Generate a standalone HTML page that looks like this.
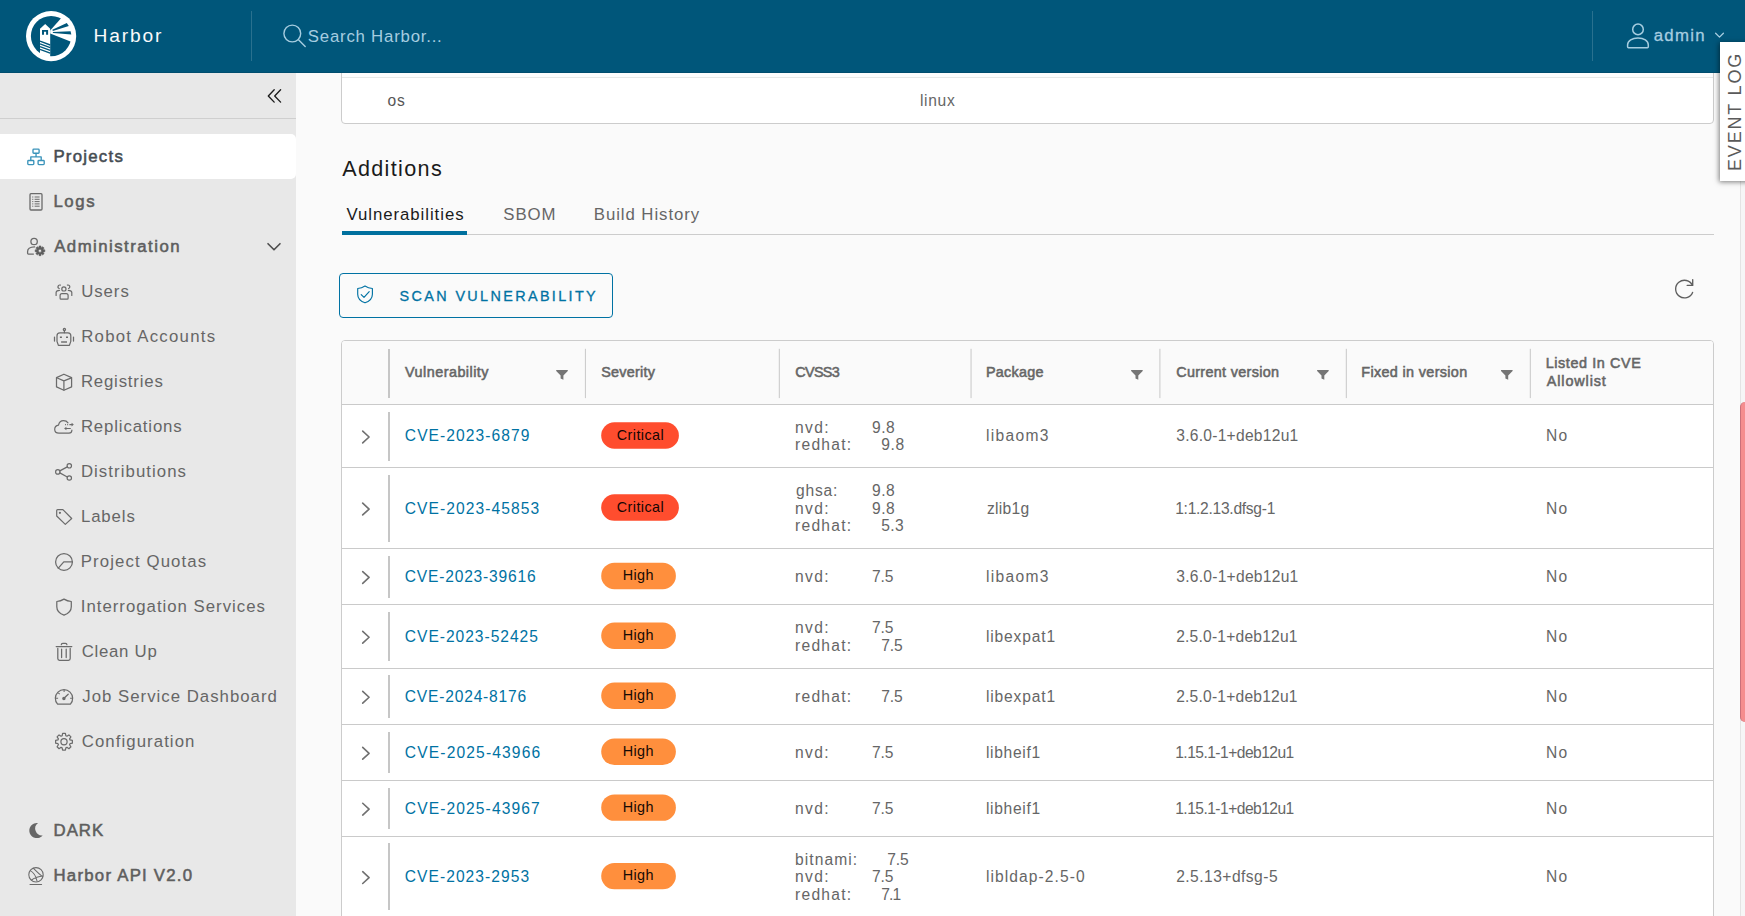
<!DOCTYPE html>
<html lang="en">
<head>
<meta charset="utf-8">
<title>Harbor</title>
<style>
html,body{margin:0;padding:0}
body{width:1745px;height:916px;overflow:hidden;position:relative;background:#fafafa;font-family:"Liberation Sans",sans-serif;color:#666}
.a{position:absolute}
.t{position:absolute;white-space:pre;line-height:1}
svg{position:absolute;overflow:visible}
#hdr{left:0;top:0;width:1745px;height:72px;background:#00567a;border-bottom:1px solid rgba(0,74,106,.72)}
.hdiv{top:10.6px;height:50px;width:1.2px;background:rgba(255,255,255,.16)}
#side{left:0;top:72px;width:296px;height:844px;background:#e8e8e8}
#sideline{left:0;top:117.6px;width:296px;height:1.2px;background:#cfcfcf}
#active{left:0;top:134.2px;width:295.8px;height:44.6px;background:#fff;border-radius:0 5px 5px 0}
#topbox{left:341px;top:60px;width:1371px;height:62px;background:#fff;border:1px solid #ccc;border-radius:0 0 4px 4px;box-sizing:content-box}
#tabline{left:342px;top:234px;width:1372px;height:1px;background:#ccc}
#tabact{left:342px;top:231px;width:125px;height:4px;background:#00709e}
#btn{left:339px;top:273px;width:272px;height:43px;border:1px solid #0072a3;border-radius:4px}
#grid{left:341px;top:340px;width:1371px;height:600px;border:1px solid #ccc;border-radius:4px 4px 0 0;background:#fff;overflow:hidden}
#ghead{left:0;top:0;width:1372px;height:63px;background:#fafafa}
.hl{position:absolute;left:342px;width:1371px;height:1px;background:#cacaca}
.vs{position:absolute;left:388px;width:2px;background:#c6c6c6}
.hs{position:absolute;top:349px;height:49px;width:1px;background:#c8c8c8}
.badge{position:absolute;left:601.2px;height:26.6px;border-radius:13.3px;color:#000;font-size:13.2px;line-height:26.6px;text-align:center;white-space:pre}
.badge span{position:relative;top:-.4px;left:.3px}
.crit{background:#ff4d2e}
.high{background:#ff8f3d}
#evt{left:1719.5px;top:41.6px;width:40px;height:139.4px;background:#fff;box-shadow:-1px 1px 5px rgba(0,0,0,.5)}
#sbtrack{left:1740px;top:73px;width:5px;height:844px;background:#f6f6f6;border-left:1px solid #e4e4e4}
#sbthumb{left:1740px;top:402px;width:12px;height:319.5px;background:#f58d8e;border-radius:5px;border-left:1.2px solid #c9707a;box-sizing:border-box}
</style>
</head>
<body>
<!-- content area -->
<div class="a" id="topbox"></div>
<div class="a" style="left:342px;top:72px;width:1371px;height:5px;background:#fcfdfd"></div>
<div class="a" style="left:342px;top:77px;width:1371px;height:1px;background:#e6e9e8"></div>
<div class="a" id="tabline"></div>
<div class="a" id="tabact"></div>
<div class="a" id="btn"></div>
<div class="a" id="grid"><div class="a" id="ghead"></div></div>
<div class="hl" style="top:404px"></div>
<div class="vs" style="top:349px;height:49px"></div>
<div class="hl" style="top:467px"></div>
<div class="vs" style="top:412px;height:49px"></div>
<div class="hl" style="top:548px"></div>
<div class="vs" style="top:475px;height:67px"></div>
<div class="hl" style="top:604px"></div>
<div class="vs" style="top:556px;height:42px"></div>
<div class="hl" style="top:668px"></div>
<div class="vs" style="top:612px;height:49px"></div>
<div class="hl" style="top:724px"></div>
<div class="vs" style="top:675px;height:43px"></div>
<div class="hl" style="top:780px"></div>
<div class="vs" style="top:732px;height:41px"></div>
<div class="hl" style="top:836px"></div>
<div class="vs" style="top:788px;height:41px"></div>
<div class="hl" style="top:917px"></div>
<div class="vs" style="top:843px;height:67px"></div>
<svg class="a" style="left:0;top:0" width="1745" height="916" viewBox="0 0 1745 916"><rect x="584.9" y="348.8" width="1" height="49.3" fill="#c8c8c8"/><rect x="778.8" y="348.8" width="1" height="49.3" fill="#c8c8c8"/><rect x="970.55" y="348.8" width="1" height="49.3" fill="#c8c8c8"/><rect x="1159.4" y="348.8" width="1" height="49.3" fill="#c8c8c8"/><rect x="1345.8" y="348.8" width="1" height="49.3" fill="#c8c8c8"/><rect x="1529.8" y="348.8" width="1" height="49.3" fill="#c8c8c8"/><path d="M362.7 431.10 L369.1 437.00 L362.7 442.90" fill="none" stroke="#707070" stroke-width="1.6" stroke-linecap="round" stroke-linejoin="round"/><rect x="601.2" y="422.30" width="77.7" height="26.4" rx="13.2" fill="#ff4d2e"/><path d="M362.7 503.15 L369.1 509.05 L362.7 514.95" fill="none" stroke="#707070" stroke-width="1.6" stroke-linecap="round" stroke-linejoin="round"/><rect x="601.2" y="494.35" width="77.7" height="26.4" rx="13.2" fill="#ff4d2e"/><path d="M362.7 571.55 L369.1 577.45 L362.7 583.35" fill="none" stroke="#707070" stroke-width="1.6" stroke-linecap="round" stroke-linejoin="round"/><rect x="601.2" y="562.75" width="74.7" height="26.4" rx="13.2" fill="#ff8f3d"/><path d="M362.7 631.35 L369.1 637.25 L362.7 643.15" fill="none" stroke="#707070" stroke-width="1.6" stroke-linecap="round" stroke-linejoin="round"/><rect x="601.2" y="622.55" width="74.7" height="26.4" rx="13.2" fill="#ff8f3d"/><path d="M362.7 691.35 L369.1 697.25 L362.7 703.15" fill="none" stroke="#707070" stroke-width="1.6" stroke-linecap="round" stroke-linejoin="round"/><rect x="601.2" y="682.55" width="74.7" height="26.4" rx="13.2" fill="#ff8f3d"/><path d="M362.7 747.40 L369.1 753.30 L362.7 759.20" fill="none" stroke="#707070" stroke-width="1.6" stroke-linecap="round" stroke-linejoin="round"/><rect x="601.2" y="738.60" width="74.7" height="26.4" rx="13.2" fill="#ff8f3d"/><path d="M362.7 803.25 L369.1 809.15 L362.7 815.05" fill="none" stroke="#707070" stroke-width="1.6" stroke-linecap="round" stroke-linejoin="round"/><rect x="601.2" y="794.45" width="74.7" height="26.4" rx="13.2" fill="#ff8f3d"/><path d="M362.7 871.70 L369.1 877.60 L362.7 883.50" fill="none" stroke="#707070" stroke-width="1.6" stroke-linecap="round" stroke-linejoin="round"/><rect x="601.2" y="862.90" width="74.7" height="26.4" rx="13.2" fill="#ff8f3d"/></svg>
<!-- scrollbar -->
<div class="a" id="sbtrack"></div>
<div class="a" id="sbthumb"></div>
<!-- sidebar -->
<div class="a" id="side"></div>
<div class="a" id="sideline"></div>
<div class="a" id="active"></div>
<!-- header -->
<div class="a" id="hdr"></div>
<div class="a hdiv" style="left:251px"></div>
<div class="a hdiv" style="left:1591.8px"></div>
<div class="a" id="evt"></div>
<svg class="a" style="left:0;top:0" width="1745" height="916" viewBox="0 0 1745 916" fill="none" stroke-linecap="round" stroke-linejoin="round">
<g stroke="none"><circle cx="51.1" cy="36.1" r="25.1" fill="#fff"/><circle cx="51.1" cy="36.1" r="20.2" fill="#00567a"/><path d="M40 28.8 L45.2 24.1 L50.2 28.8 V57.5 L40 54.5 Z" fill="#fff"/><path d="M50.2 30.4 L62.6 16.6 L75.2 30 L73 42.6 L50.2 33.4 Z" fill="#fff"/><path d="M52.3 29.7 L66.8 22.9 L68.8 26 L52.9 31.1 Z" fill="#00567a"/><path d="M52.6 31.9 L70.6 31.3 L71.3 34.6 L53.2 32.9 Z" fill="#00567a"/><path d="M42 30 H48.1 V34.8 H46.1 V31.7 H44 V34.8 H42 Z" fill="#00567a"/></g>
<g stroke="#00567a" stroke-width="1.35" stroke-linecap="butt"><path d="M40 41.2 L50.2 45 M40 43.9 L50.2 47.7 M40 46.6 L50.2 50.4 M40 49.3 L50.2 53.1"/></g>
<g stroke="#a6cde0" stroke-width="1.4"><circle cx="292.3" cy="33.5" r="8.4"/><path d="M298.5 39.8 L305.2 46.6"/></g>
<g stroke="#a6cde0" stroke-width="1.5"><circle cx="1638" cy="29.4" r="5.3"/><path d="M1627.6 46.8 V44.8 C1627.6 40.6 1632.2 37.9 1638 37.9 C1643.8 37.9 1648.3 40.6 1648.3 44.8 V46.8 Q1648.3 47.7 1647.4 47.7 H1628.5 Q1627.6 47.7 1627.6 46.8 Z"/></g>
<path d="M1715.6 33.2 L1719.5 37.1 L1723.4 33.2" stroke="#a6cde0" stroke-width="1.3"/>
<path d="M274.2 89.8 L268.3 96 L274.2 102.1 M280.6 89.8 L274.7 96 L280.6 102.1" stroke="#1c1c1c" stroke-width="1.35"/>
<path d="M268 243.7 L274 249.8 L280 243.7" stroke="#4d4d4d" stroke-width="1.6"/>
<g stroke="#3a93ba" stroke-width="1.35"><rect x="33" y="149.1" width="6.1" height="4.1" rx=".8"/><rect x="27.8" y="160.5" width="6" height="4.1" rx=".8"/><rect x="38.1" y="160.5" width="6.1" height="4.1" rx=".8"/><path d="M36.05 153.4 V156.9 M30.8 160.3 V156.9 H41.2 V160.3"/></g>
<g stroke="#6b6b6b"><rect x="30" y="193.7" width="12" height="16.3" rx="1" stroke-width="1.3"/><path stroke-width="1" stroke-linecap="butt" d="M34.6 197 H39.6 M34.6 199.3 H39.6 M34.6 201.6 H39.6 M34.6 203.9 H39.6 M34.6 206.2 H39.6 M32.2 197 h1.1 M32.2 199.3 h1.1 M32.2 201.6 h1.1 M32.2 203.9 h1.1 M32.2 206.2 h1.1"/></g>
<g stroke="#6b6b6b" stroke-width="1.3"><circle cx="34.1" cy="241.5" r="3.2"/><path d="M33.4 254.1 H28.4 Q27.6 254.1 27.6 253.3 V251.6 C27.6 248.6 30.6 247 34.6 246.9"/></g>
<path d="M38.91 247.26 L39.02 245.90 L40.98 245.90 L41.09 247.26 L41.73 247.53 L42.78 246.64 L44.16 248.02 L43.27 249.07 L43.54 249.71 L44.90 249.82 L44.90 251.78 L43.54 251.89 L43.27 252.53 L44.16 253.58 L42.78 254.96 L41.73 254.07 L41.09 254.34 L40.98 255.70 L39.02 255.70 L38.91 254.34 L38.27 254.07 L37.22 254.96 L35.84 253.58 L36.73 252.53 L36.46 251.89 L35.10 251.78 L35.10 249.82 L36.46 249.71 L36.73 249.07 L35.84 248.02 L37.22 246.64 L38.27 247.53 Z M41.6 250.8 A1.6 1.6 0 1 0 38.4 250.8 A1.6 1.6 0 1 0 41.6 250.8 Z" fill="#5e5e5e" fill-rule="evenodd" stroke="#5e5e5e" stroke-width=".5"/>
<g stroke="#6b6b6b" stroke-width="1.2"><circle cx="63.9" cy="288.9" r="2.1"/><path d="M60.1 298.2 V295.6 Q60.1 293.7 62 293.7 H66.2 Q68.1 293.7 68.1 295.6 V298.2 Q68.1 299.1 67.2 299.1 H61 Q60.1 299.1 60.1 298.2 Z"/><path d="M56.1 295.4 V292.6 Q56.1 290.4 59.5 290.3 M71.8 295.4 V292.6 Q71.8 290.4 68.3 290.3"/><path d="M60.4 285.1 A1.8 1.8 0 1 0 59.2 288.5 M67.4 285.1 A1.8 1.8 0 1 1 68.6 288.5"/></g>
<g stroke="#6b6b6b" stroke-width="1.25"><path d="M59.9 332.9 H67.9 Q70.8 332.9 70.8 335.8 V341.4 L69.4 345.4 H58.4 L57 341.4 V335.8 Q57 332.9 59.9 332.9 Z"/><path d="M64.4 332.7 V330.8"/><circle cx="64.4" cy="329.5" r="1.1"/><path d="M54.5 337.1 V341 M73.5 337.1 V341"/><path stroke-width="1.4" stroke-linecap="butt" d="M59.9 337.2 h2 M66 337.2 h2"/><path stroke="#858585" stroke-width="1.8" stroke-linecap="butt" d="M61.1 342 H67"/></g>
<g stroke="#6b6b6b" stroke-width="1.25"><path d="M63.9 374.2 L71.6 377.6 V386.9 L63.9 390.2 L56.5 386.9 V377.6 Z"/><path d="M56.7 377.8 L63.9 380.9 L71.4 377.8 M63.9 380.9 V390"/></g>
<g stroke="#6b6b6b" stroke-width="1.2"><path d="M71.9 430.2 C71.8 432 70.6 433.2 69 433.2 H59 C56.4 433.2 54.7 431.6 54.7 429.3 C54.7 427 56.3 425.4 58.5 425.1 C59.1 422.4 61.1 420.7 63.5 420.7 C65.5 420.7 67.1 421.5 68 422.8"/><path stroke-width="1.1" stroke-linecap="butt" d="M65 424.6 h.9 M67.2 424.6 h.9 M69.4 424.6 H72 M70.8 428.5 H66"/><path fill="#6b6b6b" stroke="none" d="M71.6 422.8 L73.8 424.6 L71.6 426.4 Z M66.4 426.7 L64.1 428.5 L66.4 430.3 Z"/></g>
<g stroke="#6b6b6b" stroke-width="1.2"><circle cx="57.8" cy="471.9" r="2.2"/><circle cx="69.3" cy="465.8" r="2.2"/><circle cx="69.3" cy="478" r="2.2"/><path d="M59.8 470.9 L67.3 466.9 M59.8 472.9 L67.3 477"/></g>
<g stroke="#6b6b6b" stroke-width="1.2"><path d="M57.6 509.7 H62.9 L71.7 518.5 L65.3 524.4 L56.7 516 V510.6 Q56.7 509.7 57.6 509.7 Z"/><circle cx="59.9" cy="512.8" r=".5" fill="#6b6b6b"/></g>
<g stroke="#6b6b6b" stroke-width="1.25"><circle cx="64" cy="561.9" r="8.4"/><path d="M72.3 561.8 H63.8 L58.3 568.2"/></g>
<path stroke="#6b6b6b" stroke-width="1.25" d="M64 599.1 C61.6 600.6 59.2 601.3 56.8 601.5 V606.8 C56.8 610.9 60 613.8 64 615.2 C68 613.8 71.3 610.9 71.3 606.8 V601.5 C68.8 601.3 66.4 600.6 64 599.1 Z"/>
<g stroke="#6b6b6b" stroke-width="1.25"><path d="M56.2 646.5 H71.8 M61.3 644.7 Q61.3 643.3 62.8 643.3 H65.4 Q66.9 643.3 66.9 644.7"/><path d="M57.8 648.4 V658.6 Q57.8 660.3 59.5 660.3 H68.5 Q70.2 660.3 70.2 658.6 V648.4 M61.6 649.2 V657.5 M66.2 649.2 V657.5"/></g>
<g stroke="#6b6b6b" stroke-width="1.25"><path d="M57.6 704.2 A8.65 8.65 0 1 1 70.4 704.2 Z"/><path d="M64 698.2 L68.2 694.2"/><circle cx="63.9" cy="698.4" r="1.1" fill="#6b6b6b"/><path stroke-width="1.05" stroke-linecap="butt" d="M55.9 698.3 h2.2 M70.1 698.3 h2.2 M64.1 690 v2 M58.2 692.9 L59.8 694.1"/></g>
<g stroke="#6b6b6b" stroke-width="1.2"><path d="M62.15 735.78 L62.60 733.42 L65.40 733.42 L65.85 735.78 L66.95 736.23 L68.94 734.88 L70.92 736.86 L69.57 738.85 L70.02 739.95 L72.38 740.40 L72.38 743.20 L70.02 743.65 L69.57 744.75 L70.92 746.74 L68.94 748.72 L66.95 747.37 L65.85 747.82 L65.40 750.18 L62.60 750.18 L62.15 747.82 L61.05 747.37 L59.06 748.72 L57.08 746.74 L58.43 744.75 L57.98 743.65 L55.62 743.20 L55.62 740.40 L57.98 739.95 L58.43 738.85 L57.08 736.86 L59.06 734.88 L61.05 736.23 Z"/><circle cx="64" cy="741.8" r="3.1"/></g>
<path fill="#666" stroke="none" d="M38 823 A7.6 7.6 0 1 0 42.7 835.4 A6.9 6.9 0 0 1 38 823 Z"/>
<g stroke="#6b6b6b" stroke-width="1.05"><circle cx="36" cy="874.8" r="7.2"/><path d="M30.3 870.6 C33 872 35.5 874.5 37 880.8 M31.5 880 C35 877.5 39.5 876.2 43 876 M33.5 868.3 C36.5 871.5 40 874.5 42.6 876.8 M30 884.4 H41.6" /></g>
<g stroke="#0072a3" stroke-width="1.15"><path d="M365 286 C362.6 287.6 360.2 288.3 357.7 288.5 V294.2 C357.7 298.4 361 301.4 365 302.8 C369 301.4 372.4 298.4 372.4 294.2 V288.5 C369.8 288.3 367.4 287.6 365 286 Z"/><path d="M361.2 294.6 L364 297.4 L369.2 291.6"/></g>
<g stroke="#5e5e5e" stroke-width="1.35"><path d="M1692.4 285.3 A8.8 8.8 0 1 0 1692.6 292.4"/><path d="M1692.7 279.6 V285.4 H1687.2"/></g>
<path d="M556.2 369.9 h11.6 v1.1 l-4.4 4.5 v4.3 l-2.8 -1.3 v-3 l-4.4 -4.5 Z" fill="#757575"/>
<path d="M1131.1 369.9 h11.6 v1.1 l-4.4 4.5 v4.3 l-2.8 -1.3 v-3 l-4.4 -4.5 Z" fill="#757575"/>
<path d="M1317.1 369.9 h11.6 v1.1 l-4.4 4.5 v4.3 l-2.8 -1.3 v-3 l-4.4 -4.5 Z" fill="#757575"/>
<path d="M1501 369.9 h11.6 v1.1 l-4.4 4.5 v4.3 l-2.8 -1.3 v-3 l-4.4 -4.5 Z" fill="#757575"/>
</svg>
<div class="t" style="left:1725.7px;top:171px;font-size:18px;color:#5a5a5a;letter-spacing:1.82px;transform-origin:0 0;transform:rotate(-90deg)">EVENT LOG</div>
<div class="t" style="left:93.60px;top:26px;font-size:19.2px;color:#fafafa;letter-spacing:1.828px;">Harbor</div>
<div class="t" style="left:307.80px;top:29px;font-size:16.8px;color:#a6cde0;letter-spacing:0.785px;">Search Harbor...</div>
<div class="t" style="left:1653.70px;top:28px;font-size:16.8px;color:#a6cde0;-webkit-text-stroke:.3px;letter-spacing:1.282px;">admin</div>
<div class="t" style="left:53.40px;top:149px;font-size:16.8px;color:#454c52;-webkit-text-stroke:.55px;letter-spacing:1.253px;">Projects</div>
<div class="t" style="left:53.40px;top:194px;font-size:16.8px;color:#5e5e5e;-webkit-text-stroke:.55px;letter-spacing:1.600px;">Logs</div>
<div class="t" style="left:54.20px;top:239px;font-size:16.8px;color:#5e5e5e;-webkit-text-stroke:.55px;letter-spacing:1.462px;">Administration</div>
<div class="t" style="left:81.20px;top:284px;font-size:16.8px;color:#666;letter-spacing:0.942px;">Users</div>
<div class="t" style="left:81.20px;top:329px;font-size:16.8px;color:#666;letter-spacing:1.256px;">Robot Accounts</div>
<div class="t" style="left:80.90px;top:374px;font-size:16.8px;color:#666;letter-spacing:0.809px;">Registries</div>
<div class="t" style="left:80.90px;top:419px;font-size:16.8px;color:#666;letter-spacing:0.853px;">Replications</div>
<div class="t" style="left:80.90px;top:464px;font-size:16.8px;color:#666;letter-spacing:1.063px;">Distributions</div>
<div class="t" style="left:80.90px;top:509px;font-size:16.8px;color:#666;letter-spacing:0.908px;">Labels</div>
<div class="t" style="left:80.80px;top:554px;font-size:16.8px;color:#666;letter-spacing:1.100px;">Project Quotas</div>
<div class="t" style="left:80.80px;top:599px;font-size:16.8px;color:#666;letter-spacing:0.993px;">Interrogation Services</div>
<div class="t" style="left:81.70px;top:644px;font-size:16.8px;color:#666;letter-spacing:0.725px;">Clean Up</div>
<div class="t" style="left:82.30px;top:689px;font-size:16.8px;color:#666;letter-spacing:1.005px;">Job Service Dashboard</div>
<div class="t" style="left:81.70px;top:734px;font-size:16.8px;color:#666;letter-spacing:1.076px;">Configuration</div>
<div class="t" style="left:53.50px;top:823px;font-size:16.8px;color:#5e5e5e;-webkit-text-stroke:.55px;letter-spacing:1.023px;">DARK</div>
<div class="t" style="left:53.50px;top:868px;font-size:16.8px;color:#5e5e5e;-webkit-text-stroke:.55px;letter-spacing:1.239px;">Harbor API V2.0</div>
<div class="t" style="left:387.40px;top:93px;font-size:15.6px;color:#565656;letter-spacing:0.927px;">os</div>
<div class="t" style="left:919.90px;top:93px;font-size:15.6px;color:#666;letter-spacing:0.707px;">linux</div>
<div class="t" style="left:342.20px;top:158px;font-size:21.6px;color:#1a1a1a;letter-spacing:1.333px;">Additions</div>
<div class="t" style="left:346.40px;top:207px;font-size:16.8px;color:#1a1a1a;letter-spacing:0.953px;">Vulnerabilities</div>
<div class="t" style="left:503.30px;top:207px;font-size:16.8px;color:#666;letter-spacing:0.954px;">SBOM</div>
<div class="t" style="left:593.80px;top:207px;font-size:16.8px;color:#666;letter-spacing:0.933px;">Build History</div>
<div class="t" style="left:399.60px;top:289px;font-size:14.4px;color:#0072a3;-webkit-text-stroke:.3px;letter-spacing:2.362px;">SCAN VULNERABILITY</div>
<div class="t" style="left:405.10px;top:365px;font-size:14.4px;color:#666;-webkit-text-stroke:.55px;letter-spacing:0.462px;">Vulnerability</div>
<div class="t" style="left:601.20px;top:365px;font-size:14.4px;color:#666;-webkit-text-stroke:.55px;letter-spacing:0.259px;">Severity</div>
<div class="t" style="left:795.30px;top:365px;font-size:14.4px;color:#666;-webkit-text-stroke:.55px;letter-spacing:-0.672px;">CVSS3</div>
<div class="t" style="left:985.90px;top:365px;font-size:14.4px;color:#666;-webkit-text-stroke:.55px;letter-spacing:0.250px;">Package</div>
<div class="t" style="left:1176.20px;top:365px;font-size:14.4px;color:#666;-webkit-text-stroke:.55px;letter-spacing:0.316px;">Current version</div>
<div class="t" style="left:1361.30px;top:365px;font-size:14.4px;color:#666;-webkit-text-stroke:.55px;letter-spacing:0.342px;">Fixed in version</div>
<div class="t" style="left:1545.70px;top:356px;font-size:14.4px;color:#666;-webkit-text-stroke:.55px;letter-spacing:0.593px;">Listed In CVE</div>
<div class="t" style="left:1546.80px;top:374px;font-size:14.4px;color:#666;-webkit-text-stroke:.55px;letter-spacing:0.878px;">Allowlist</div>
<div class="t" style="left:404.80px;top:428px;font-size:15.6px;color:#0072a3;letter-spacing:1.070px;">CVE-2023-6879</div>
<div class="t" style="left:795.00px;top:420px;font-size:15.6px;color:#666;letter-spacing:1.386px;">nvd:</div>
<div class="t" style="left:871.90px;top:420px;font-size:15.6px;color:#666;letter-spacing:0.598px;">9.8</div>
<div class="t" style="left:795.00px;top:437px;font-size:15.6px;color:#666;letter-spacing:1.264px;">redhat:</div>
<div class="t" style="left:881.30px;top:437px;font-size:15.6px;color:#666;letter-spacing:0.598px;">9.8</div>
<div class="t" style="left:985.90px;top:428px;font-size:15.6px;color:#666;letter-spacing:1.311px;">libaom3</div>
<div class="t" style="left:1176.20px;top:428px;font-size:15.6px;color:#666;letter-spacing:0.265px;">3.6.0-1+deb12u1</div>
<div class="t" style="left:1546.10px;top:428px;font-size:15.6px;color:#666;letter-spacing:1.139px;">No</div>
<div class="t" style="left:616.80px;top:428px;font-size:14.4px;color:#160604;letter-spacing:0.418px;">Critical</div>
<div class="t" style="left:404.80px;top:501px;font-size:15.6px;color:#0072a3;letter-spacing:1.059px;">CVE-2023-45853</div>
<div class="t" style="left:796.00px;top:483px;font-size:15.6px;color:#666;letter-spacing:0.771px;">ghsa:</div>
<div class="t" style="left:871.90px;top:483px;font-size:15.6px;color:#666;letter-spacing:0.598px;">9.8</div>
<div class="t" style="left:795.00px;top:501px;font-size:15.6px;color:#666;letter-spacing:1.386px;">nvd:</div>
<div class="t" style="left:871.90px;top:501px;font-size:15.6px;color:#666;letter-spacing:0.598px;">9.8</div>
<div class="t" style="left:795.00px;top:518px;font-size:15.6px;color:#666;letter-spacing:1.264px;">redhat:</div>
<div class="t" style="left:881.30px;top:518px;font-size:15.6px;color:#666;letter-spacing:0.298px;">5.3</div>
<div class="t" style="left:986.90px;top:501px;font-size:15.6px;color:#666;letter-spacing:0.306px;">zlib1g</div>
<div class="t" style="left:1175.20px;top:501px;font-size:15.6px;color:#666;letter-spacing:-0.276px;">1:1.2.13.dfsg-1</div>
<div class="t" style="left:1546.10px;top:501px;font-size:15.6px;color:#666;letter-spacing:1.139px;">No</div>
<div class="t" style="left:616.80px;top:500px;font-size:14.4px;color:#160604;letter-spacing:0.418px;">Critical</div>
<div class="t" style="left:404.80px;top:569px;font-size:15.6px;color:#0072a3;letter-spacing:0.790px;">CVE-2023-39616</div>
<div class="t" style="left:795.00px;top:569px;font-size:15.6px;color:#666;letter-spacing:1.386px;">nvd:</div>
<div class="t" style="left:871.90px;top:569px;font-size:15.6px;color:#666;letter-spacing:-0.102px;">7.5</div>
<div class="t" style="left:985.90px;top:569px;font-size:15.6px;color:#666;letter-spacing:1.311px;">libaom3</div>
<div class="t" style="left:1176.20px;top:569px;font-size:15.6px;color:#666;letter-spacing:0.265px;">3.6.0-1+deb12u1</div>
<div class="t" style="left:1546.10px;top:569px;font-size:15.6px;color:#666;letter-spacing:1.139px;">No</div>
<div class="t" style="left:622.70px;top:568px;font-size:14.4px;color:#160a04;letter-spacing:0.369px;">High</div>
<div class="t" style="left:404.80px;top:629px;font-size:15.6px;color:#0072a3;letter-spacing:0.967px;">CVE-2023-52425</div>
<div class="t" style="left:795.00px;top:620px;font-size:15.6px;color:#666;letter-spacing:1.386px;">nvd:</div>
<div class="t" style="left:871.90px;top:620px;font-size:15.6px;color:#666;letter-spacing:-0.102px;">7.5</div>
<div class="t" style="left:795.00px;top:638px;font-size:15.6px;color:#666;letter-spacing:1.264px;">redhat:</div>
<div class="t" style="left:881.30px;top:638px;font-size:15.6px;color:#666;letter-spacing:-0.102px;">7.5</div>
<div class="t" style="left:985.90px;top:629px;font-size:15.6px;color:#666;letter-spacing:0.844px;">libexpat1</div>
<div class="t" style="left:1176.20px;top:629px;font-size:15.6px;color:#666;letter-spacing:0.208px;">2.5.0-1+deb12u1</div>
<div class="t" style="left:1546.10px;top:629px;font-size:15.6px;color:#666;letter-spacing:1.139px;">No</div>
<div class="t" style="left:622.70px;top:628px;font-size:14.4px;color:#160a04;letter-spacing:0.369px;">High</div>
<div class="t" style="left:404.80px;top:689px;font-size:15.6px;color:#0072a3;letter-spacing:0.795px;">CVE-2024-8176</div>
<div class="t" style="left:795.00px;top:689px;font-size:15.6px;color:#666;letter-spacing:1.264px;">redhat:</div>
<div class="t" style="left:881.30px;top:689px;font-size:15.6px;color:#666;letter-spacing:-0.102px;">7.5</div>
<div class="t" style="left:985.90px;top:689px;font-size:15.6px;color:#666;letter-spacing:0.844px;">libexpat1</div>
<div class="t" style="left:1176.20px;top:689px;font-size:15.6px;color:#666;letter-spacing:0.208px;">2.5.0-1+deb12u1</div>
<div class="t" style="left:1546.10px;top:689px;font-size:15.6px;color:#666;letter-spacing:1.139px;">No</div>
<div class="t" style="left:622.70px;top:688px;font-size:14.4px;color:#160a04;letter-spacing:0.369px;">High</div>
<div class="t" style="left:404.80px;top:745px;font-size:15.6px;color:#0072a3;letter-spacing:1.144px;">CVE-2025-43966</div>
<div class="t" style="left:795.00px;top:745px;font-size:15.6px;color:#666;letter-spacing:1.386px;">nvd:</div>
<div class="t" style="left:871.90px;top:745px;font-size:15.6px;color:#666;letter-spacing:-0.102px;">7.5</div>
<div class="t" style="left:985.90px;top:745px;font-size:15.6px;color:#666;letter-spacing:0.694px;">libheif1</div>
<div class="t" style="left:1175.20px;top:745px;font-size:15.6px;color:#666;letter-spacing:-0.531px;">1.15.1-1+deb12u1</div>
<div class="t" style="left:1546.10px;top:745px;font-size:15.6px;color:#666;letter-spacing:1.139px;">No</div>
<div class="t" style="left:622.70px;top:744px;font-size:14.4px;color:#160a04;letter-spacing:0.369px;">High</div>
<div class="t" style="left:404.80px;top:801px;font-size:15.6px;color:#0072a3;letter-spacing:1.105px;">CVE-2025-43967</div>
<div class="t" style="left:795.00px;top:801px;font-size:15.6px;color:#666;letter-spacing:1.386px;">nvd:</div>
<div class="t" style="left:871.90px;top:801px;font-size:15.6px;color:#666;letter-spacing:-0.102px;">7.5</div>
<div class="t" style="left:985.90px;top:801px;font-size:15.6px;color:#666;letter-spacing:0.694px;">libheif1</div>
<div class="t" style="left:1175.20px;top:801px;font-size:15.6px;color:#666;letter-spacing:-0.531px;">1.15.1-1+deb12u1</div>
<div class="t" style="left:1546.10px;top:801px;font-size:15.6px;color:#666;letter-spacing:1.139px;">No</div>
<div class="t" style="left:622.70px;top:800px;font-size:14.4px;color:#160a04;letter-spacing:0.369px;">High</div>
<div class="t" style="left:404.80px;top:869px;font-size:15.6px;color:#0072a3;letter-spacing:1.037px;">CVE-2023-2953</div>
<div class="t" style="left:795.00px;top:852px;font-size:15.6px;color:#666;letter-spacing:1.076px;">bitnami:</div>
<div class="t" style="left:887.20px;top:852px;font-size:15.6px;color:#666;letter-spacing:-0.102px;">7.5</div>
<div class="t" style="left:795.00px;top:869px;font-size:15.6px;color:#666;letter-spacing:1.386px;">nvd:</div>
<div class="t" style="left:871.90px;top:869px;font-size:15.6px;color:#666;letter-spacing:-0.102px;">7.5</div>
<div class="t" style="left:795.00px;top:887px;font-size:15.6px;color:#666;letter-spacing:1.264px;">redhat:</div>
<div class="t" style="left:881.30px;top:887px;font-size:15.6px;color:#666;letter-spacing:-0.902px;">7.1</div>
<div class="t" style="left:985.90px;top:869px;font-size:15.6px;color:#666;letter-spacing:1.071px;">libldap-2.5-0</div>
<div class="t" style="left:1176.20px;top:869px;font-size:15.6px;color:#666;letter-spacing:0.464px;">2.5.13+dfsg-5</div>
<div class="t" style="left:1546.10px;top:869px;font-size:15.6px;color:#666;letter-spacing:1.139px;">No</div>
<div class="t" style="left:622.70px;top:868px;font-size:14.4px;color:#160a04;letter-spacing:0.369px;">High</div>
</body>
</html>
